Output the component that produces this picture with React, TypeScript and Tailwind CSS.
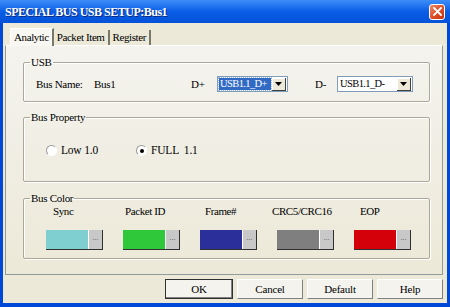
import React from "react";

const serif = { fontFamily: '"Liberation Serif", "Times New Roman", serif' };

function ComboBox({ value, active }: { value: string; active?: boolean }) {
  return (
    <div className="flex items-center h-[16px] border border-[#7F9DB9] bg-white pl-[1px] pr-[1px]">
      <div
        className={`flex-1 h-[12px] flex items-center px-[1px] leading-none text-[10.5px] tracking-[-0.6px] whitespace-nowrap overflow-hidden ${
          active ? "bg-[#316AC5] text-white outline-1 outline-dotted outline-[#9fb8e8]" : "text-black"
        }`}
      >
        {value}
      </div>
      <div className="ml-[1px] w-[14px] h-[13px] flex-none flex items-center justify-center bg-[#ECE9D8] border-r border-b border-[#404040] shadow-[inset_1px_1px_0_#ffffff]">
        <svg width="7" height="4" viewBox="0 0 7 4">
          <path d="M0 0h7L3.5 4z" fill="#000" />
        </svg>
      </div>
    </div>
  );
}

function Radio({ checked, label }: { checked?: boolean; label: string }) {
  return (
    <div className="flex items-center gap-[4px]">
      <div className="w-[11px] h-[11px] rounded-full border border-[#9a9a9a] border-r-white border-b-white bg-white flex items-center justify-center">
        {checked && <div className="w-[4px] h-[4px] rounded-full bg-black" />}
      </div>
      <span className="text-[11.5px] leading-none tracking-[-0.2px] whitespace-pre">{label}</span>
    </div>
  );
}

function Group({
  title,
  className,
  children,
}: {
  title: string;
  className: string;
  children: React.ReactNode;
}) {
  return (
    <fieldset
      className={`border border-[#ACA899] rounded-[2px] shadow-[inset_1px_1px_0_#ffffff,1px_1px_0_#ffffff] ${className}`}
    >
      <legend className="ml-[6px] px-[1px] text-[11px] leading-none tracking-[-0.3px]">{title}</legend>
      {children}
    </fieldset>
  );
}

const colors = [
  { label: "Sync", color: "bg-[#7FCFD0]", lab: "ml-[7px]" },
  { label: "Packet ID", color: "bg-[#2EC83A]", lab: "ml-[2px]" },
  { label: "Frame#", color: "bg-[#2A2F9A]", lab: "ml-[5px]" },
  { label: "CRC5/CRC16", color: "bg-[#7F7F7F]", lab: "-ml-[5px]" },
  { label: "EOP", color: "bg-[#D4000A]", lab: "ml-[6px]" },
];

export default function App() {
  return (
    <div
      className="w-[450px] h-[307px] flex flex-col bg-[#0048D8] overflow-hidden text-black"
      style={serif}
    >
      {/* title bar */}
      <div className="h-[23px] flex-none flex items-center justify-between pl-[5px] pr-[5px] bg-gradient-to-b from-[#3C8DF8] via-[#0A5DE6] to-[#0452D8]">
        <span className="text-white font-bold text-[12px] tracking-[-0.5px] [text-shadow:1px_1px_0_#0a2a80]">
          SPECIAL BUS USB SETUP:Bus1
        </span>
        <div className="w-[16px] h-[16px] rounded-[3px] border border-white bg-gradient-to-br from-[#EE8A6A] via-[#DF4F2A] to-[#C4300F] flex items-center justify-center">
          <svg width="9" height="9" viewBox="0 0 9 9">
            <path d="M1 1l7 7M8 1L1 8" stroke="#fff" strokeWidth="1.8" strokeLinecap="square" />
          </svg>
        </div>
      </div>

      {/* body */}
      <div className="flex-1 mx-[3px] mb-[4px] bg-[#ECE9D8] flex flex-col pl-[2px] pr-[4px] pt-[4px]">
        {/* tabs */}
        <div className="flex items-end h-[18px] pl-[5px] text-[11px] leading-none tracking-[-0.4px]">
          <div className="h-[18px] px-[3px] flex items-center bg-[#F8F7F1] border-t border-l border-[#ffffff] border-r-2 border-r-[#7a7868] relative top-[1px]">
            Analytic
          </div>
          <div className="h-[15px] px-[3px] flex items-center border-r-2 border-r-[#7a7868]">
            Packet Item
          </div>
          <div className="h-[15px] px-[3px] flex items-center border-r-2 border-r-[#7a7868]">
            Register
          </div>
        </div>

        {/* panel */}
        <div className="h-[230px] border border-[#919B9C] border-t-[#ffffff] bg-gradient-to-b from-[#F4F3EE] to-[#ECE9D8] pl-[17px] pr-[12px] pt-[11px] flex flex-col">
          <Group title="USB" className="h-[45px]">
            <div className="flex items-center h-[16px] mt-[8px] text-[11px] tracking-[-0.3px]">
              <span className="ml-[12px] w-[58px]">Bus Name:</span>
              <span className="w-[97px]">Bus1</span>
              <span className="w-[26px]">D+</span>
              <div className="w-[71px]">
                <ComboBox value="USB1.1_D+" active />
              </div>
              <span className="ml-[27px] w-[22px]">D-</span>
              <div className="w-[76px]">
                <ComboBox value="USB1.1_D-" />
              </div>
            </div>
          </Group>

          <Group title="Bus Property" className="mt-[10px] h-[70px]">
            <div className="flex items-center mt-[22px] ml-[22px]">
              <div className="w-[90px]">
                <Radio label="Low 1.0" />
              </div>
              <Radio checked label="FULL  1.1" />
            </div>
          </Group>

          <Group title="Bus Color" className="mt-[11px] h-[66px]">
            <div className="flex ml-[22px] gap-[20px] mt-[2px]">
              {colors.map((c) => (
                <div key={c.label} className="flex flex-col w-[57px]">
                  <span className={`text-[11px] leading-none tracking-[-0.4px] whitespace-nowrap ${c.lab}`}>
                    {c.label}
                  </span>
                  <div className="mt-[13px] h-[20px] flex border-r border-b border-[#303030]">
                    <div className={`flex-1 ${c.color}`} />
                    <div className="w-[14px] bg-[#C8C8C8] border-l border-[#ffffff] flex items-center justify-center text-[8px] leading-none text-[#555] pb-[3px]">
                      ...
                    </div>
                  </div>
                </div>
              ))}
            </div>
          </Group>
        </div>

        {/* buttons */}
        <div className="flex justify-end gap-[4px] mt-[4px] text-[11px] tracking-[-0.2px]">
          <button className="w-[68px] h-[20px] bg-[#F4F3EE] border border-[#303030] shadow-[inset_-1px_-1px_0_#808080]">
            OK
          </button>
          <button className="w-[66px] h-[20px] bg-[#F4F3EE] border border-[#ffffff] border-r-[#808080] border-b-[#808080]">
            Cancel
          </button>
          <button className="w-[66px] h-[20px] bg-[#F4F3EE] border border-[#ffffff] border-r-[#808080] border-b-[#808080]">
            Default
          </button>
          <button className="w-[66px] h-[20px] bg-[#F4F3EE] border border-[#ffffff] border-r-[#808080] border-b-[#808080]">
            Help
          </button>
        </div>
      </div>
    </div>
  );
}
